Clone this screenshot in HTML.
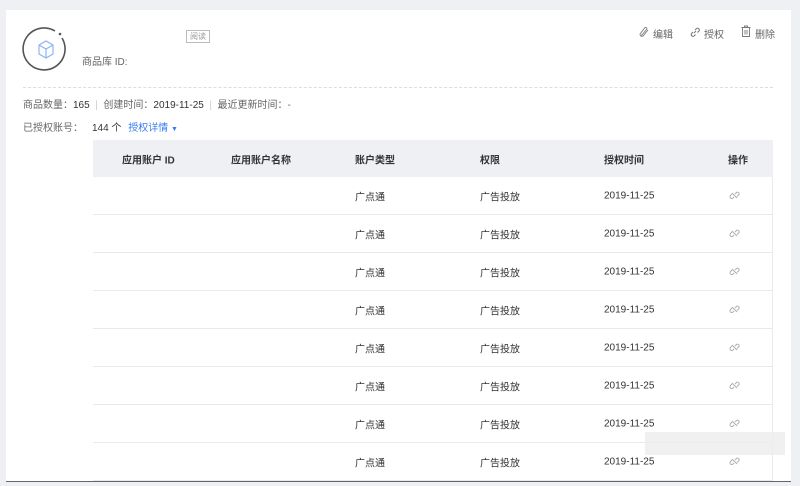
<!DOCTYPE html>
<html><head><meta charset="utf-8"><style>
*{margin:0;padding:0;box-sizing:border-box}
body{width:800px;height:486px;background:#eef0f3;font-family:"Liberation Sans","Noto Sans CJK SC",sans-serif;font-size:10px;color:#333;position:relative;overflow:hidden}
.card{position:absolute;left:6px;top:10px;width:785px;height:472px;background:#fff;border-bottom:1px solid #666}
.abs{position:absolute;white-space:nowrap}
.g{color:#666}
.tbl{position:absolute;left:93px;top:140px;width:680px}
.hd{height:37px;background:#eff0f4;position:relative;font-weight:bold;color:#333}
.row{height:38px;border-bottom:1px solid #e8e9ed;position:relative;border-right:1px solid #e8e9ed}
.c{position:absolute;top:50%;transform:translateY(-50%);white-space:nowrap}
.ic{position:absolute;left:636px;top:13px}
</style></head><body>
<div class="card"></div>
<svg class="abs" style="left:22px;top:26px" width="48" height="48" viewBox="0 0 48 48">
<path d="M40 12 A21 21 0 1 1 33 5" fill="none" stroke="#555" stroke-width="1.6"/>
<circle cx="38" cy="8" r="1.3" fill="#555"/>
<path d="M17 19 L24 15 L31 19 L31 28 L24 32 L17 28 Z M17 19 L24 23 L31 19 M24 23 L24 32" fill="none" stroke="#8fb3f5" stroke-width="1.2"/>
</svg>
<div class="abs" style="left:186px;top:30px;border:1px solid #bbb;color:#999;font-size:8px;padding:0 3px;line-height:11px">阅读</div>
<div class="abs g" style="left:82px;top:53px">商品库 ID:</div>
<svg class="abs" style="left:638px;top:26px" width="12" height="12" viewBox="0 0 12 12"><path d="M3 10 L9 3 A1.6 1.6 0 0 0 7 1.5 L2 8 A2 2 0 0 0 5 10 L10 4" fill="none" stroke="#777" stroke-width="0.9"/></svg>
<div class="abs g" style="left:653px;top:26px">编辑</div>
<svg class="abs" style="left:689px;top:26px" width="12" height="12" viewBox="0 0 12 12"><path d="M5 7 L7 5 M4 6 L2.5 7.5 A1.8 1.8 0 0 0 5 10 L6.5 8.5 M6 4 L7.5 2.5 A1.8 1.8 0 0 1 10 5 L8.5 6.5" fill="none" stroke="#777" stroke-width="1"/></svg>
<div class="abs g" style="left:704px;top:26px">授权</div>
<svg class="abs" style="left:740px;top:25px" width="12" height="13" viewBox="0 0 12 13"><path d="M1.5 2.5 H10.5 M4.5 2.5 V1 H7.5 V2.5 M2.5 2.5 V11.5 H9.5 V2.5 M5 5 V9.5 M7 5 V9.5" fill="none" stroke="#777" stroke-width="0.9"/></svg>
<div class="abs g" style="left:755px;top:26px">删除</div>
<div class="abs" style="left:23px;top:87px;width:750px;border-top:1px dashed #ddd"></div>
<div class="abs g" style="left:23px;top:96px">商品数量：<span style="color:#333">165</span> <span style="color:#ccc">&nbsp;|&nbsp;</span> 创建时间：<span style="color:#333">2019-11-25</span> <span style="color:#ccc">&nbsp;|&nbsp;</span> 最近更新时间：-</div>
<div class="abs g" style="left:23px;top:119px">已授权账号：</div>
<div class="abs" style="left:92px;top:119px">144 个 <span style="color:#3b7cf5;margin-left:4px">授权详情 <span style="font-size:7px">▼</span></span></div>
<div class="tbl">
<div class="hd"><span class="c" style="left:29px">应用账户 ID</span><span class="c" style="left:138px">应用账户名称</span><span class="c" style="left:262px">账户类型</span><span class="c" style="left:387px">权限</span><span class="c" style="left:511px">授权时间</span><span class="c" style="left:635px">操作</span></div>
<div class="row"><span class="c" style="left:262px">广点通</span><span class="c" style="left:387px">广告投放</span><span class="c" style="left:511px">2019-11-25</span><svg class="ic" width="11" height="11" viewBox="0 0 11 11"><path d="M3 4 L1.5 5.5 A1.6 1.6 0 0 0 4 8 L5 7 M6 4 L7.5 2.5 A1.6 1.6 0 0 1 9.5 5 L8 6.5 M3 3 L8 8" fill="none" stroke="#aaa" stroke-width="0.9"/></svg></div>
<div class="row"><span class="c" style="left:262px">广点通</span><span class="c" style="left:387px">广告投放</span><span class="c" style="left:511px">2019-11-25</span><svg class="ic" width="11" height="11" viewBox="0 0 11 11"><path d="M3 4 L1.5 5.5 A1.6 1.6 0 0 0 4 8 L5 7 M6 4 L7.5 2.5 A1.6 1.6 0 0 1 9.5 5 L8 6.5 M3 3 L8 8" fill="none" stroke="#aaa" stroke-width="0.9"/></svg></div>
<div class="row"><span class="c" style="left:262px">广点通</span><span class="c" style="left:387px">广告投放</span><span class="c" style="left:511px">2019-11-25</span><svg class="ic" width="11" height="11" viewBox="0 0 11 11"><path d="M3 4 L1.5 5.5 A1.6 1.6 0 0 0 4 8 L5 7 M6 4 L7.5 2.5 A1.6 1.6 0 0 1 9.5 5 L8 6.5 M3 3 L8 8" fill="none" stroke="#aaa" stroke-width="0.9"/></svg></div>
<div class="row"><span class="c" style="left:262px">广点通</span><span class="c" style="left:387px">广告投放</span><span class="c" style="left:511px">2019-11-25</span><svg class="ic" width="11" height="11" viewBox="0 0 11 11"><path d="M3 4 L1.5 5.5 A1.6 1.6 0 0 0 4 8 L5 7 M6 4 L7.5 2.5 A1.6 1.6 0 0 1 9.5 5 L8 6.5 M3 3 L8 8" fill="none" stroke="#aaa" stroke-width="0.9"/></svg></div>
<div class="row"><span class="c" style="left:262px">广点通</span><span class="c" style="left:387px">广告投放</span><span class="c" style="left:511px">2019-11-25</span><svg class="ic" width="11" height="11" viewBox="0 0 11 11"><path d="M3 4 L1.5 5.5 A1.6 1.6 0 0 0 4 8 L5 7 M6 4 L7.5 2.5 A1.6 1.6 0 0 1 9.5 5 L8 6.5 M3 3 L8 8" fill="none" stroke="#aaa" stroke-width="0.9"/></svg></div>
<div class="row"><span class="c" style="left:262px">广点通</span><span class="c" style="left:387px">广告投放</span><span class="c" style="left:511px">2019-11-25</span><svg class="ic" width="11" height="11" viewBox="0 0 11 11"><path d="M3 4 L1.5 5.5 A1.6 1.6 0 0 0 4 8 L5 7 M6 4 L7.5 2.5 A1.6 1.6 0 0 1 9.5 5 L8 6.5 M3 3 L8 8" fill="none" stroke="#aaa" stroke-width="0.9"/></svg></div>
<div class="row"><span class="c" style="left:262px">广点通</span><span class="c" style="left:387px">广告投放</span><span class="c" style="left:511px">2019-11-25</span><svg class="ic" width="11" height="11" viewBox="0 0 11 11"><path d="M3 4 L1.5 5.5 A1.6 1.6 0 0 0 4 8 L5 7 M6 4 L7.5 2.5 A1.6 1.6 0 0 1 9.5 5 L8 6.5 M3 3 L8 8" fill="none" stroke="#aaa" stroke-width="0.9"/></svg></div>
<div class="row"><span class="c" style="left:262px">广点通</span><span class="c" style="left:387px">广告投放</span><span class="c" style="left:511px">2019-11-25</span><svg class="ic" width="11" height="11" viewBox="0 0 11 11"><path d="M3 4 L1.5 5.5 A1.6 1.6 0 0 0 4 8 L5 7 M6 4 L7.5 2.5 A1.6 1.6 0 0 1 9.5 5 L8 6.5 M3 3 L8 8" fill="none" stroke="#aaa" stroke-width="0.9"/></svg></div>
</div>
<div class="abs" style="left:645px;top:432px;width:140px;height:23px;background:#ececec;opacity:.8"></div>
</body></html>
